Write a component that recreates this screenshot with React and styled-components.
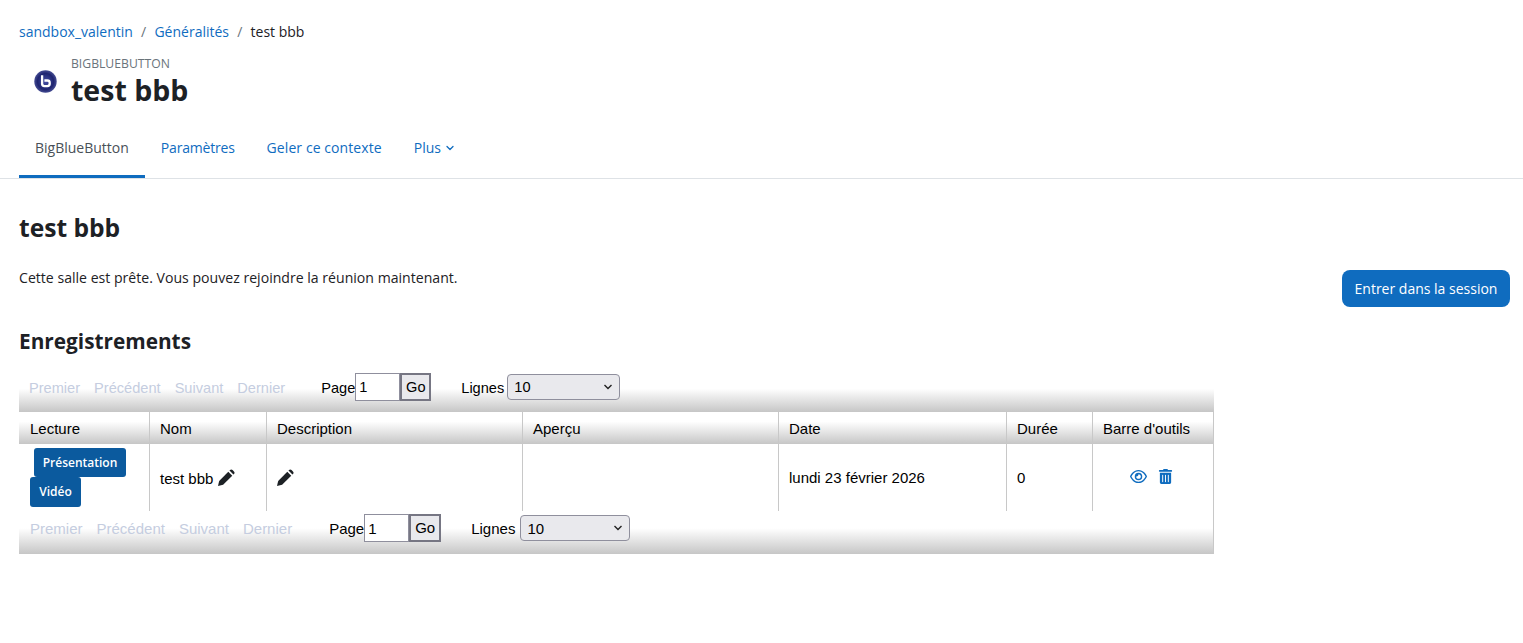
import React from 'react';
import styled, { createGlobalStyle } from 'styled-components';
import { FaTrashAlt } from 'react-icons/fa';
import { FaRegEye } from 'react-icons/fa6';
import { LuChevronDown } from 'react-icons/lu';

const GlobalStyle = createGlobalStyle`
  html, body {
    margin: 0;
    background: #fff;
    color: #1d2125;
    font-family: "Open Sans", "Noto Sans", "Liberation Sans", sans-serif;
    font-size: 14px;
  }
`;

const selectArrow = "url(\"data:image/svg+xml,%3Csvg xmlns='http://www.w3.org/2000/svg' width='10' height='6'%3E%3Cpath d='M1.5 1l3.5 3.5L8.500 1' fill='none' stroke='%23222' stroke-width='1.4'/%3E%3C/svg%3E\")";

const Page = styled.div`
  width: 1523px;
  height: 643px;
  overflow: hidden;
`;

const Breadcrumb = styled.nav`
  display: flex;
  gap: 8.2px;
  height: 20px;
  padding: 22px 0 0 19px;
  line-height: 20px;
`;

const Crumb = styled.a`
  color: #0f6cbf;
  text-decoration: none;
`;

const Sep = styled.span`
  color: #6a737b;
`;

const Heading = styled.div`
  display: flex;
  padding: 14px 0 0 34px;
  height: 59px;
`;

const LogoBox = styled.div`
  width: 37px;
  padding-top: 14px;
`;

const Kicker = styled.div`
  font-size: 12.2px;
  line-height: 16px;
  color: #6a737b;
`;

const PageTitle = styled.h1`
  margin: 0;
  font-size: 28.5px;
  line-height: 36px;
  font-weight: 700;
`;

const Tabs = styled.ul`
  display: flex;
  list-style: none;
  margin: 0;
  padding: 0 0 0 19px;
  height: 63px;
  border-bottom: 1px solid #dee2e6;
`;

const Tab = styled.li`
  display: flex;
  align-items: center;
  gap: 3px;
  padding: 5px 16px 0;
  height: 63px;
  box-sizing: border-box;
  color: ${(p) => (p.$active ? '#495057' : '#0f6cbf')};
  letter-spacing: ${(p) => p.$spacing || 0}px;
  border-bottom: 3px solid ${(p) => (p.$active ? '#0f6cbf' : 'transparent')};
`;

const Content = styled.main`
  padding: 0 13px 0 19px;
`;

const SectionTitle = styled.h2`
  margin: 0;
  padding-top: 33px;
  font-size: 24.6px;
  line-height: 32px;
  font-weight: 700;
`;

const JoinRow = styled.div`
  display: flex;
  justify-content: space-between;
  align-items: flex-start;
  padding-top: 26px;
`;

const Notice = styled.p`
  margin: 0;
  font-size: 14.1px;
  line-height: 16px;
`;

const JoinButton = styled.button`
  height: 37px;
  width: 168px;
  padding: 0;
  border: 0;
  border-radius: 8px;
  background: #0f6cbf;
  color: #fff;
  font: inherit;
`;

const SubTitle = styled.h3`
  margin: 0;
  padding-top: 18px;
  font-size: 20.8px;
  line-height: 32px;
  font-weight: 700;
`;

const Recordings = styled.div`
  width: 1195px;
  margin-top: 16px;
  font-family: "Liberation Sans", Arial, sans-serif;
  font-size: 15px;
  color: #000;
`;

const Paginator = styled.div`
  display: flex;
  align-items: flex-start;
  box-sizing: border-box;
  height: ${(p) => (p.$bottom ? '43px' : '39px')};
  padding: ${(p) => (p.$bottom ? '3px 0 0 11px' : '0 0 0 10px')};
  background: linear-gradient(#fff 40%, #c6c6c6 100%);
  border-right: ${(p) => (p.$bottom ? '1px solid #c8c8c8' : '0')};
  font-size: ${(p) => (p.$bottom ? '15px' : '14.6px')};
  line-height: 30px;
`;

const PageLink = styled.span`
  color: #c5cde0;
  margin-right: 14px;
`;

const PageLabel = styled.label`
  display: flex;
  margin-left: ${(p) => (p.$bottom ? '23px' : '22px')};
`;

const PageInput = styled.input`
  width: 45px;
  height: 28px;
  box-sizing: border-box;
  padding: 0 3px;
  border: 1px solid #8f8f9d;
  border-radius: 0;
  background: #fff;
  font: inherit;
  line-height: normal;
  color: #000;
`;

const GoButton = styled.button`
  width: ${(p) => (p.$bottom ? '32px' : '31px')};
  height: 28px;
  padding: 0;
  border: 2px solid #767683;
  background: #e9e9ed;
  font: inherit;
  line-height: 22px;
  color: #000;
`;

const RowsLabel = styled.label`
  display: flex;
  gap: ${(p) => (p.$bottom ? '5px' : '3px')};
  margin-left: 30px;
`;

const RowsSelect = styled.select`
  appearance: none;
  width: ${(p) => (p.$bottom ? '110px' : '113px')};
  height: 26px;
  margin-top: 1px;
  padding: 0 6px;
  border: 1px solid #8f8f9d;
  border-radius: 4px;
  background: #e9e9ed ${selectArrow} no-repeat right 6px center;
  font: inherit;
  line-height: normal;
  color: #000;
`;

const Table = styled.table`
  width: 1195px;
  table-layout: fixed;
  border-collapse: separate;
  border-spacing: 0;
`;

const HeadCell = styled.th`
  width: ${(p) => p.$w}px;
  height: 32px;
  box-sizing: border-box;
  padding: ${(p) => (p.$first ? '0 10px 0 11px' : '0 10px')};
  border-left: ${(p) => (p.$first ? '0' : '1px solid #c8c8c8')};
  border-right: ${(p) => (p.$last ? '1px solid #c8c8c8' : '0')};
  background: linear-gradient(#fff 30%, #c6c6c6 100%);
  text-align: left;
  font-weight: 400;
  white-space: nowrap;
`;

const Cell = styled.td`
  height: 67px;
  box-sizing: border-box;
  padding: ${(p) => (p.$play ? '0 0 0 11px' : '0 10px')};
  border-left: ${(p) => (p.$play ? '0' : '1px solid #c8c8c8')};
  border-right: ${(p) => (p.$last ? '1px solid #c8c8c8' : '0')};
  vertical-align: middle;
`;

const PlayButton = styled.a`
  display: block;
  width: ${(p) => p.$w}px;
  height: ${(p) => p.$h}px;
  margin-left: ${(p) => p.$indent}px;
  border-radius: 3px;
  background: #0b5a9e;
  color: #fff;
  font-family: "Open Sans", "Noto Sans", sans-serif;
  font-size: 12px;
  font-weight: 600;
  line-height: ${(p) => p.$h}px;
  text-align: center;
`;

const PencilSvg = styled.svg`
  width: 17px;
  height: 17px;
  margin-left: ${(p) => p.$gap || 0}px;
  vertical-align: -2px;
  fill: #1d2125;
`;

const ToolIcons = styled.div`
  display: flex;
  justify-content: center;
  align-items: center;
  gap: 11px;
  padding: 0 3px 2px 0;
  color: #0f6cbf;
`;

const EditIcon = ({ gap }) => (
  <PencilSvg $gap={gap} viewBox="0 0 16 16">
    <path d="M0 16l1.100-4.800L9.700 2.600l3.700 3.700-8.600 8.600z" />
    <path d="M10.800 1.500l.5-.5a1.700 1.700 0 0 1 2.400 0l1.300 1.300a1.700 1.700 0 0 1 0 2.400l-.5.5z" />
  </PencilSvg>
);

const BbbLogo = () => (
  <svg width="23" height="23" viewBox="0 0 23 23">
    <defs>
      <radialGradient id="bbbGrad" cx="50%" cy="50%" r="50%">
        <stop offset="0%" stopColor="#4650a6" />
        <stop offset="72%" stopColor="#1f2570" />
        <stop offset="100%" stopColor="#454c92" />
      </radialGradient>
    </defs>
    <circle cx="11.5" cy="11.5" r="11.2" fill="url(#bbbGrad)" />
    <path
      d="M8.100 5.200v8.600a2.300 2.300 0 0 0 2.300 2.300h3a2.300 2.300 0 0 0 2.300-2.300v-1a2.300 2.300 0 0 0-2.300-2.300h-3"
      fill="none"
      stroke="#fff"
      strokeWidth="2.300"
    />
  </svg>
);

const columns = [
  { label: 'Lecture', w: 130 },
  { label: 'Nom', w: 117 },
  { label: 'Description', w: 256 },
  { label: 'Aperçu', w: 256 },
  { label: 'Date', w: 228 },
  { label: 'Durée', w: 86 },
  { label: "Barre d'outils", w: 122 },
];

const Pager = ({ bottom }) => (
  <Paginator $bottom={bottom}>
    {['Premier', 'Précédent', 'Suivant', 'Dernier'].map((t) => (
      <PageLink key={t}>{t}</PageLink>
    ))}
    <PageLabel $bottom={bottom}>
      Page
      <PageInput defaultValue="1" />
      <GoButton $bottom={bottom}>Go</GoButton>
    </PageLabel>
    <RowsLabel $bottom={bottom}>
      Lignes
      <RowsSelect $bottom={bottom} defaultValue="10">
        <option>10</option>
        <option>20</option>
      </RowsSelect>
    </RowsLabel>
  </Paginator>
);

const App = () => (
  <Page>
    <GlobalStyle />
    <Breadcrumb>
      <Crumb>sandbox_valentin</Crumb>
      <Sep>/</Sep>
      <Crumb>Généralités</Crumb>
      <Sep>/</Sep>
      <span>test bbb</span>
    </Breadcrumb>
    <Heading>
      <LogoBox><BbbLogo /></LogoBox>
      <div>
        <Kicker>BIGBLUEBUTTON</Kicker>
        <PageTitle>test bbb</PageTitle>
      </div>
    </Heading>
    <Tabs>
      <Tab $active>BigBlueButton</Tab>
      <Tab $spacing={-0.2}>Paramètres</Tab>
      <Tab $spacing={0.08}>Geler ce contexte</Tab>
      <Tab>Plus <LuChevronDown size={12} strokeWidth={2.6} /></Tab>
    </Tabs>
    <Content>
      <SectionTitle>test bbb</SectionTitle>
      <JoinRow>
        <Notice>Cette salle est prête. Vous pouvez rejoindre la réunion maintenant.</Notice>
        <JoinButton>Entrer dans la session</JoinButton>
      </JoinRow>
      <SubTitle>Enregistrements</SubTitle>
      <Recordings>
        <Pager />
        <Table>
          <thead>
            <tr>
              {columns.map((c, i) => (
                <HeadCell key={c.label} $w={c.w} $first={i === 0} $last={i === columns.length - 1}>{c.label}</HeadCell>
              ))}
            </tr>
          </thead>
          <tbody>
            <tr>
              <Cell $play>
                <PlayButton $w={92} $h={29} $indent={4}>Présentation</PlayButton>
                <PlayButton $w={51} $h={30} $indent={0}>Vidéo</PlayButton>
              </Cell>
              <Cell>test bbb<EditIcon gap={5} /></Cell>
              <Cell><EditIcon /></Cell>
              <Cell />
              <Cell>lundi 23 février 2026</Cell>
              <Cell>0</Cell>
              <Cell $last>
                <ToolIcons>
                  <FaRegEye size={17} />
                  <FaTrashAlt size={15} />
                </ToolIcons>
              </Cell>
            </tr>
          </tbody>
        </Table>
        <Pager bottom />
      </Recordings>
    </Content>
  </Page>
);

export default App;
